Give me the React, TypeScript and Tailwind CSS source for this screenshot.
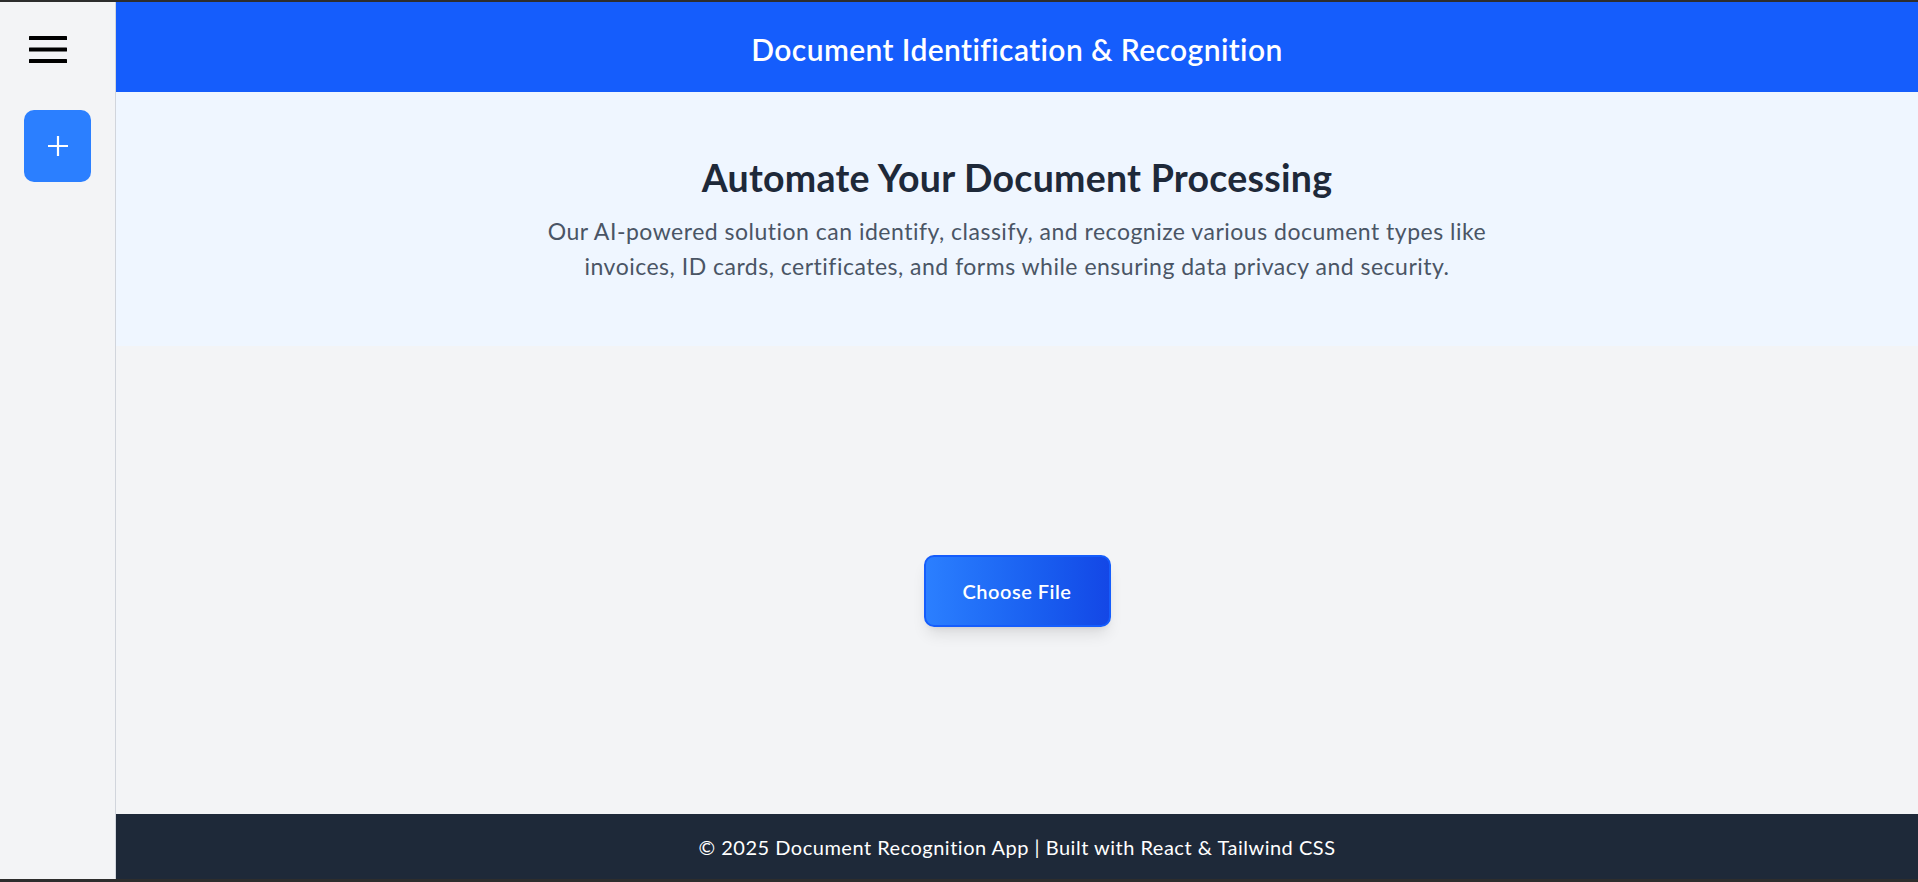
import React from 'react'

const font = { fontFamily: 'Lato, "Noto Sans", sans-serif' }

const Hamburger = () => (
  <svg width="38" height="27" viewBox="0 0 38 27" className="block">
    <rect x="0" y="0" width="38" height="4" rx="0.5" fill="#000" />
    <rect x="0" y="11.5" width="38" height="4" rx="0.5" fill="#000" />
    <rect x="0" y="23" width="38" height="4" rx="0.5" fill="#000" />
  </svg>
)

const Sidebar = () => (
  <aside className="flex w-[116px] shrink-0 flex-col items-center border-r border-[#d1d5dc] bg-[#f3f4f6]">
    <button className="mt-[34px] self-start ml-[29px]" aria-label="menu">
      <Hamburger />
    </button>
    <button
      className="mt-[47px] flex h-[72px] w-[67px] items-center justify-center rounded-[10px] bg-[#2b7fff]"
      aria-label="new"
    >
      <svg width="22" height="22" viewBox="0 0 22 22">
        <path d="M11 1v20M1 11h20" stroke="#fff" strokeWidth="2.2" />
      </svg>
    </button>
  </aside>
)

export default function App() {
  return (
    <div
      className="flex h-screen w-full border-t-2 border-b-[3px] border-[#2d2d2d] bg-[#f3f4f6]"
      style={font}
    >
      <Sidebar />
      <div className="flex min-w-0 flex-1 flex-col">
        <header className="flex h-[90px] shrink-0 items-center justify-center bg-[#155dfc] pt-1">
          <h1 className="text-[30px] font-semibold tracking-[0.4px] text-white">
            Document Identification &amp; Recognition
          </h1>
        </header>

        <section className="flex h-[254px] shrink-0 flex-col items-center bg-[#eff6ff] pt-[63px]">
          <h2 className="text-[37.5px] leading-[45px] font-bold tracking-[0.25px] text-[#1e2939]">
            Automate Your Document Processing
          </h2>
          <p className="mt-[14px] text-center text-[23px] leading-[35px] tracking-[0.5px] text-[#4a5565]">
            Our AI-powered solution can identify, classify, and recognize various document types like
            <br />
            invoices, ID cards, certificates, and forms while ensuring data privacy and security.
          </p>
        </section>

        <main className="flex flex-1 items-center justify-center pt-[22px]">
          <label className="flex h-[72px] w-[187px] cursor-pointer items-center justify-center rounded-[10px] border-2 border-[#155dfc] bg-gradient-to-r from-[#2b7fff] to-[#1447e6] text-[20px] font-semibold tracking-[0.5px] text-white shadow-lg">
            Choose File
            <input type="file" className="hidden" />
          </label>
        </main>

        <footer className="flex h-[65px] shrink-0 items-center justify-center bg-[#1e2939] text-[20px] tracking-[0.5px] text-white">
          © 2025 Document Recognition App | Built with React &amp; Tailwind CSS
        </footer>
      </div>
    </div>
  )
}
